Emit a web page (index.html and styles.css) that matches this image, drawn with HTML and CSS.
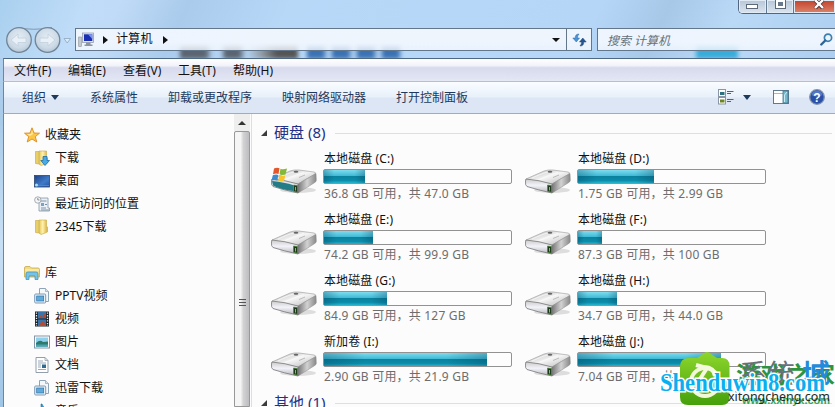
FILE: index.html
```html
<!DOCTYPE html>
<html lang="zh-CN">
<head>
    <meta charset="UTF-8">
    <title>计算机</title>
    <link rel="stylesheet" href="styles.css">
</head>
<body>
    <!-- shared icons -->
    <svg class="defs" width="0" height="0">
        <defs>
            <linearGradient id="top" x1="0" y1="0" x2="1" y2="1"><stop offset="0" stop-color="#b4b4b4"/><stop offset=".5" stop-color="#f4f4f4"/><stop offset="1" stop-color="#b8b8b8"/></linearGradient>
            <linearGradient id="side" x1="0" y1="0" x2="1" y2="0"><stop offset="0" stop-color="#777"/><stop offset=".5" stop-color="#d2d2d2"/><stop offset="1" stop-color="#888"/></linearGradient>
            <linearGradient id="front" x1="0" y1="0" x2="0" y2="1"><stop offset="0" stop-color="#ccc"/><stop offset=".45" stop-color="#f2f2fa"/><stop offset="1" stop-color="#b4b4b8"/></linearGradient>
            <linearGradient id="folder" x1="0" y1="0" x2="1" y2="0"><stop offset="0" stop-color="#e5c65b"/><stop offset=".5" stop-color="#fff2ae"/><stop offset="1" stop-color="#dfb94d"/></linearGradient>
            <linearGradient id="screen" x1="0" y1="0" x2="1" y2="1"><stop offset="0" stop-color="#1c3f86"/><stop offset=".6" stop-color="#3f7bc8"/><stop offset="1" stop-color="#2554a0"/></linearGradient>
            <linearGradient id="leaf" x1="0" y1="0" x2="0" y2="1"><stop offset="0" stop-color="#8ed62c"/><stop offset="1" stop-color="#45a00c"/></linearGradient>
            <radialGradient id="nav" cx=".5" cy=".4" r=".6"><stop offset="0" stop-color="#e3ecf4"/><stop offset=".7" stop-color="#ccdae7"/><stop offset="1" stop-color="#b4c5d5"/></radialGradient>
            <symbol id="drive" viewBox="0 0 48 28">
                <ellipse cx="28" cy="23" rx="18" ry="3" fill="#000" opacity=".12"/>
                <path d="M2 12 L20 4 Q24 2.500 29 3 L44 5 Q46.500 5.500 45 7 L28 17 L2 13Z" fill="url(#top)" stroke="#999" stroke-width=".6"/>
                <path d="M28 17 L46 6.500 L46.300 13.500 Q46 15 44 16 L28 26Z" fill="url(#side)" stroke="#888" stroke-width=".5"/>
                <path d="M2 12 Q15 13 28 17 L28 26 Q14 23 3 19.500 Q1 18.500 1.500 14Z" fill="url(#front)" stroke="#777" stroke-width=".8"/>
                <path d="M23.500 18 L27.500 18.500 V25.200 L23.500 24.300Z" fill="#1d3a1a" stroke="#4a8b35" stroke-width=".7"/>
                <path d="M25.500 20 V23.500" stroke="#9be06c" stroke-width=".8"/>
                <path d="M8 11 Q21 5 26 4.500 M15 12.500 Q28 7 34 5.500" stroke="#fff" stroke-width=".8" fill="none" opacity=".8"/>
                <ellipse cx="26" cy="4.800" rx="2.400" ry="1" fill="#666"/>
                <path d="M29 10.500 L35 8" stroke="#999" stroke-width=".6"/>
            </symbol>
            <symbol id="folder-open" viewBox="0 0 16 16">
                <path d="M1.500 1.500 H9 V14.500 L1.500 13.500Z" fill="#e8cf69" stroke="#c5a645" stroke-width=".6"/>
                <path d="M5 1 H12.500 V13.500 L7 15.500 L5 14Z" fill="url(#folder)" stroke="#cba945" stroke-width=".6"/>
                <path d="M12.500 7 L14 8 V13 L12.500 13.500Z" fill="#dfb94d"/>
            </symbol>
            <symbol id="device-lib" viewBox="0 0 16 16">
                <path d="M5.500 .5 H11.500 L14.500 3.500 V13.500 H5.500Z" fill="#f4f8fb" stroke="#8ea4b7"/>
                <path d="M11.500 .5 V3.500 H14.500" fill="#d6e2ee" stroke="#8ea4b7" stroke-width=".7"/>
                <rect x=".7" y="6" width="11" height="9" rx="1" fill="#e4eff7" stroke="#7e9bb5"/>
                <rect x="2.700" y="8" width="7" height="5" fill="#5eaadb" stroke="#28699f" stroke-width=".6"/>
            </symbol>
        </defs>
    </svg>

    <div class="window">
        <header class="glass">
            <i class="ghost ghost-a"></i><i class="ghost ghost-b"></i><i class="ghost ghost-c"></i>
            <div class="captions">
                <span class="cap cap-min"><i></i></span><span class="cap cap-max"><i></i></span><span class="cap cap-close">
                    <svg width="12" height="9" viewBox="0 0 12 9"><path d="M2 0 L10 8.500 M10 0 L2 8.500" stroke="#5b3a3a" stroke-width="4"/><path d="M2 0 L10 8 M10 0 L2 8" stroke="#fff" stroke-width="2.400"/></svg>
                </span>
            </div>
            <div class="navbar">
                <svg class="nav-buttons" width="66" height="28" viewBox="0 0 66 28">
                    <path d="M14 1.500 Q27 5 47 1.500" fill="none" stroke="#8299b1"/>
                    <circle cx="14" cy="14" r="12.300" fill="url(#nav)" stroke="#718496" stroke-width="1.300"/>
                    <circle cx="42.500" cy="14" r="12.300" fill="url(#nav)" stroke="#718496" stroke-width="1.300"/>
                    <path d="M6 14 L13 8 V12 H21 V16.500 H13 V20Z" fill="#e9f0f7" stroke="#c2d0dd" stroke-width=".8"/>
                    <path d="M50 14 L43 8 V12 H35 V16.500 H43 V20Z" fill="#e9f0f7" stroke="#c2d0dd" stroke-width=".8"/>
                    <path d="M59 12.500 H65.500 L62.200 17Z" fill="#dcebf8" stroke="#8ba6c0" stroke-width=".8"/>
                </svg>
                <div class="address">
                    <svg width="16" height="16" viewBox="0 0 16 16">
                        <rect x="4.500" y="1" width="11" height="9.500" fill="#dfe2e6" stroke="#98a0aa" stroke-width=".8"/>
                        <rect x="6" y="2.300" width="8.300" height="6.700" fill="#1b2fb4"/><path d="M10 2.300 H14.300 V7Z" fill="#7b96ee"/>
                        <path d="M8 10.500 H12.500 V12.500 H14.500 V14 H6.500 V12.500 H8Z" fill="#8c949f"/>
                        <rect x=".7" y="5" width="2.600" height="9.500" fill="#c3c8ce" stroke="#8b9198" stroke-width=".6"/>
                    </svg>
                    <span class="crumb-arrow"></span>
                    <span class="crumb">计算机</span>
                    <span class="crumb-arrow"></span>
                    <span class="drop-arrow"></span>
                    <span class="refresh">
                        <svg width="15" height="14" viewBox="0 0 15 14">
                            <path d="M7 1 Q3 1 3.300 5 H.8 L4.300 9 L7.500 5 H5.300 Q5.300 3 7 1Z" fill="#4a93d4" stroke="#2c67a8" stroke-width=".5"/>
                            <path d="M8 13 Q12 13 11.700 9 H14.200 L10.800 5 L7.500 9 H9.700 Q9.700 11 8 13Z" fill="#25558e" stroke="#1e487c" stroke-width=".5"/>
                        </svg>
                    </span>
                </div>
                <div class="search">
                    <span>搜索 计算机</span>
                    <svg width="13" height="13" viewBox="0 0 13 13"><circle cx="8" cy="4.700" r="3.600" fill="#e9f4fc" stroke="#3d7fae" stroke-width="1.700"/><path d="M5.300 7.500 L1.300 11.500" stroke="#2d6594" stroke-width="2.400" stroke-linecap="round"/></svg>
                </div>
            </div>
        </header>

        <nav class="menubar">
            <span>文件(F)</span><span>编辑(E)</span><span>查看(V)</span><span>工具(T)</span><span>帮助(H)</span>
        </nav>

        <div class="toolbar">
            <span class="organize">组织 <i class="caret"></i></span>
            <span>系统属性</span>
            <span>卸载或更改程序</span>
            <span>映射网络驱动器</span>
            <span>打开控制面板</span>
            <div class="tools">
                <svg width="16" height="16" viewBox="0 0 16 16">
                    <rect x=".5" y=".5" width="7" height="7" fill="#fff" stroke="#8a96a5"/><rect x="2" y="3" width="4.500" height="3" fill="#2b7182"/>
                    <rect x=".5" y="8.500" width="7" height="6.500" fill="#fff" stroke="#8a96a5"/><rect x="2" y="10.500" width="4.500" height="3" fill="#698621"/>
                    <path d="M9 2.500 H15.500 M9 4.500 H13 M9 10.500 H15.500 M9 12.500 H13" stroke="#58616d"/>
                </svg>
                <i class="caret caret-view"></i>
                <svg width="16" height="14" viewBox="0 0 16 14"><rect x=".5" y=".5" width="15" height="13" fill="#fff" stroke="#5f798f"/><path d="M1 3.500 H15" stroke="#a6b8c6"/><rect x="10" y="1" width="5" height="12" fill="#74bbcf" stroke="#42788c" stroke-width=".8"/><path d="M11.500 12 V5 L14 2" stroke="#c8edf4" fill="none"/></svg>
                <svg class="help" width="16" height="16" viewBox="0 0 16 16"><circle cx="8" cy="8" r="7.300" fill="#2850a8" stroke="#8392ac" stroke-width="1.300"/><path d="M2.500 6 A5.700 5.700 0 0 1 13.500 6 Q8 9 2.500 6Z" fill="#6d94dc" opacity=".6"/><text x="8" y="12.500" text-anchor="middle">?</text></svg>
            </div>
        </div>

        <main class="content">
            <aside class="sidebar">
                <ul class="tree">
                    <li class="root"><svg width="16" height="16" viewBox="0 0 16 16"><path d="M8 .8 L10 6 L15.500 6.200 L11.300 9.700 L12.800 15 L8 12 L3.200 15 L4.700 9.700 L.5 6.200 L6 6Z" fill="#fbc646" stroke="#db8b20" stroke-width=".9"/><path d="M8 3 L9 7 L6 9 L3 7 L7 7Z" fill="#ffe9a0"/></svg>收藏夹</li>
                    <li><svg width="16" height="16" viewBox="0 0 16 16"><use href="#folder-open"/><path d="M9 6.500 H13 V10.500 H15.500 L11 15.500 L6.800 10.500 H9Z" fill="#4aaae3" stroke="#1d6da9" stroke-width=".8"/></svg>下载</li>
                    <li><svg width="16" height="16" viewBox="0 0 16 16"><rect x=".5" y="2.500" width="15" height="11.500" fill="url(#screen)" stroke="#2b4570" stroke-width=".8"/><path d="M1 12.500 H15" stroke="#5d82b4"/><circle cx="2.500" cy="12" r="1.500" fill="#a4dff0"/></svg>桌面</li>
                    <li><svg width="16" height="16" viewBox="0 0 16 16"><path d="M5 2 H14 V12 H15.500 V15 H5Z" fill="#eaf0f5" stroke="#8696a5" stroke-width=".8"/><path d="M7 5 H12.500 M7 12 H12 M7 14 H15" stroke="#8095a8"/><rect x="7" y="7" width="3" height="3" fill="#78a4c4"/><path d="M11 8.500 H13" stroke="#7393ad"/><circle cx="3.800" cy="4" r="3.200" fill="#f6f6f6" stroke="#8f9aa4" stroke-width=".8"/><path d="M3.800 2 V4 H5.500" stroke="#666" stroke-width=".7" fill="none"/></svg>最近访问的位置</li>
                    <li><svg width="16" height="16"><use href="#folder-open"/></svg>2345下载</li>
                    <li class="gap"></li>
                    <li class="root"><svg width="16" height="16" viewBox="0 0 16 16"><path d="M.5 3 Q.5 1.500 2 1.500 H6 L7.500 3 H14 Q15.500 3 15.500 4.500 V12 H.5Z" fill="#f0dc85" stroke="#c9aa4b" stroke-width=".8"/><path d="M1 5 H15" stroke="#fff5c4"/><path d="M2 14.500 V9 Q2 7 4 7 H12 Q14 7 14 9 V14.500 H11 V11 H5 V14.500Z" fill="#75c3e6" stroke="#3d8cb8" stroke-width=".7"/></svg>库</li>
                    <li><svg width="16" height="16"><use href="#device-lib"/></svg>PPTV视频</li>
                    <li><svg width="16" height="16" viewBox="0 0 16 16"><rect x="1" y=".5" width="14" height="15" fill="#1e2429"/><rect x="4" y="1" width="8" height="6.500" fill="#3b74aa"/><rect x="4" y="8.500" width="8" height="6.500" fill="#3b74aa"/><path d="M5 4 L9 6 L11 2 V7 H6Z M5 14 L8 10 L11 12 V14Z" fill="#b64932"/><path d="M2.500 1.500 V15 M13.500 1.500 V15" stroke="#eee" stroke-width="1.300" stroke-dasharray="1.300 1.300"/></svg>视频</li>
                    <li><svg width="16" height="16" viewBox="0 0 16 16"><rect x=".5" y="2" width="15" height="12" fill="#fff" stroke="#8496a5"/><rect x="2" y="3.500" width="12" height="9" fill="#8fd0ed"/><path d="M2 9 Q6 5 9 8 L14 7.500 V12.500 H2Z" fill="#2f7969"/><path d="M2 10.500 H14 V12.500 H2Z" fill="#42a4b8"/></svg>图片</li>
                    <li><svg width="16" height="16" viewBox="0 0 16 16"><path d="M2 .5 H11 L14 3.500 V15.500 H2Z" fill="#fff" stroke="#8795a2" stroke-width=".9"/><path d="M11 .5 V3.500 H14" fill="none" stroke="#8795a2" stroke-width=".7"/><path d="M4 4 H9 M4 6 H12 M4 8 H7 M4 10 H7 M4 12.500 H12" stroke="#8da2b6" stroke-width=".9"/><rect x="8" y="7.500" width="4" height="3.500" fill="#2e6b91"/></svg>文档</li>
                    <li><svg width="16" height="16"><use href="#device-lib"/></svg>迅雷下载</li>
                    <li><svg width="16" height="16" viewBox="0 0 16 16"><path d="M8 1 Q9 4 12 6 Q13 9 11 11 Q11 7 9 6.500 V13 Q8 15.500 5 15 Q3 13 5 11.500 L7 11 V1Z" fill="#2e9bd4" stroke="#1c70a5" stroke-width=".6"/></svg>音乐</li>
                </ul>
                <div class="scrollbar">
                    <i class="scroll-up"></i>
                    <div class="thumb"><i></i><i></i><i></i></div>
                </div>
            </aside>

            <section class="files">
                <h2 class="group"><svg width="8" height="8" viewBox="0 0 8 8"><path d="M7 1 V7 H1Z" fill="#3b3b3b"/></svg><span>硬盘 (8)</span></h2>
                <div class="drives">
                    <div class="drive">
                        <svg class="disk" width="48" height="28" viewBox="0 0 48 28"><use href="#drive"/><path d="M2 14 Q15 15.500 23 18 V24 Q10 22 3 18.500Z" fill="#247c86"/><path d="M4 1.500 Q7 0 9.500 1.300 L8.500 7 Q6 6 3 7.300Z" fill="#e4562b"/><path d="M10.500 1.700 Q13 3 17 1.500 L15.500 7.500 Q12 8.500 9.500 7.300Z" fill="#83b936"/><path d="M2.800 8.300 Q6 7 8.300 8 L7.300 13.500 Q4 12.300 1.500 13.500Z" fill="#3c8bce"/><path d="M9.300 8.300 Q12 9.500 15.300 8.500 L14 14 Q11 15 8.300 13.800Z" fill="#f6c42c"/></svg>
                        <div class="info"><b>本地磁盘 (C:)</b><div class="bar"><i style="width:41px"></i></div><small>36.8 GB 可用，共 47.0 GB</small></div>
                    </div>
                    <div class="drive">
                        <svg class="disk" width="48" height="28"><use href="#drive"/></svg>
                        <div class="info"><b>本地磁盘 (D:)</b><div class="bar"><i style="width:76px"></i></div><small>1.75 GB 可用，共 2.99 GB</small></div>
                    </div>
                    <div class="drive">
                        <svg class="disk" width="48" height="28"><use href="#drive"/></svg>
                        <div class="info"><b>本地磁盘 (E:)</b><div class="bar"><i style="width:49px"></i></div><small>74.2 GB 可用，共 99.9 GB</small></div>
                    </div>
                    <div class="drive">
                        <svg class="disk" width="48" height="28"><use href="#drive"/></svg>
                        <div class="info"><b>本地磁盘 (F:)</b><div class="bar"><i style="width:24px"></i></div><small>87.3 GB 可用，共 100 GB</small></div>
                    </div>
                    <div class="drive">
                        <svg class="disk" width="48" height="28"><use href="#drive"/></svg>
                        <div class="info"><b>本地磁盘 (G:)</b><div class="bar"><i style="width:63px"></i></div><small>84.9 GB 可用，共 127 GB</small></div>
                    </div>
                    <div class="drive">
                        <svg class="disk" width="48" height="28"><use href="#drive"/></svg>
                        <div class="info"><b>本地磁盘 (H:)</b><div class="bar"><i style="width:39px"></i></div><small>34.7 GB 可用，共 44.0 GB</small></div>
                    </div>
                    <div class="drive">
                        <svg class="disk" width="48" height="28"><use href="#drive"/></svg>
                        <div class="info"><b>新加卷 (I:)</b><div class="bar"><i style="width:163px"></i></div><small>2.90 GB 可用，共 21.9 GB</small></div>
                    </div>
                    <div class="drive">
                        <svg class="disk" width="48" height="28"><use href="#drive"/></svg>
                        <div class="info"><b>本地磁盘 (J:)</b><div class="bar"><i style="width:143px"></i></div><small>7.04 GB 可用，共</small></div>
                    </div>
                </div>
                <h2 class="group"><svg width="8" height="8" viewBox="0 0 8 8"><path d="M7 1 V7 H1Z" fill="#3b3b3b"/></svg><span>其他 (1)</span></h2>
            </section>
        </main>
    </div>

    <!-- site watermark -->
    <svg class="watermark" width="175" height="57" viewBox="0 0 175 57">
        <path d="M37 8 L43 4 Q47 0 51 4 L57 8 H62 Q69.500 8 69.500 16 V47 Q69.500 55 62 55 H28 Q20 55 20 47 V17 Q20 8 29 8Z" fill="url(#leaf)"/>
        <circle cx="45" cy="32" r="14" fill="none" stroke="#f1f8d8" stroke-width="4"/>
        <path d="M36 15 L47 18 L40 29 M43 17 Q53 16 55 26" fill="none" stroke="#f4f8dd" stroke-width="4"/>
        <text class="wm-green" x="76" y="33" textLength="99" lengthAdjust="spacingAndGlyphs">游戏之家</text>
        <text class="wm-gray" x="79" y="33" textLength="56" lengthAdjust="spacingAndGlyphs">系统</text>
        <text class="wm-blue" x="142" y="33" textLength="28" lengthAdjust="spacingAndGlyphs">城</text>
        <text class="wm-url-green" x="82" y="54" textLength="88" lengthAdjust="spacingAndGlyphs">www.xxmyx.com</text>
        <text class="wm-url" x="68" y="51" textLength="102" lengthAdjust="spacingAndGlyphs">xitongcheng.com</text>
        <text class="wm-main" x="0" y="41" textLength="165" lengthAdjust="spacingAndGlyphs">Shenduwin8.com</text>
    </svg>
</body>
</html>
```
FILE: styles.css
```css
* { box-sizing: border-box; }
body { margin: 0; width: 835px; height: 407px; overflow: hidden; position: relative; font-family: "Noto Sans", "Noto Sans CJK SC", sans-serif; font-size: 12px; color: #111; background: #b5d5f5; }
i { font-style: normal; }
svg { display: block; flex: none; }
.defs { position: absolute; }
.window { height: 407px; display: flex; flex-direction: column; background: linear-gradient(#b5d3f1, #a9cbea 30%, #c8e0f6 60%, #9fc5e6); }

/* title and address */
.glass { position: relative; height: 58px; padding-top: 26px; background: linear-gradient(115deg, #a9d0ef 0, #bfdcf8 10%, #c0dbf7 14%, #aacbec 22%, #b8d8f8 34%, #b5d6f7 70%, #a8c8e8 78%, #bad9f7 86%, #aecff0); overflow: hidden; }
.ghost { position: absolute; top: 45px; height: 14px; filter: blur(2px); }
.ghost-a { left: 180px; width: 118px; background: linear-gradient(90deg, #5b6470 0 22%, transparent 27% 35%, #5b6470 38% 50%, transparent 56%, #8f979f 70%, #555 82% 100%); }
.ghost-b { left: 307px; width: 94px; background: repeating-linear-gradient(90deg, #3b72b4 0 16px, #a9cbee 20px 25px); }
.ghost-c { left: 696px; width: 42px; background: #3aacda; }
.captions { position: absolute; right: 0; top: 0; display: flex; width: 97px; height: 14px; border: 1px solid #52677f; border-top: 0; border-right: 0; border-radius: 0 0 0 5px; overflow: hidden; }
.cap { display: flex; justify-content: center; width: 28px; background: linear-gradient(#b6c6d7, #dae4ee); border-right: 1px solid #627990; box-shadow: inset 0 0 0 1px #e1ebf5; }
.cap-min i { width: 12px; height: 5px; margin-top: 4px; border: 1px solid #5d6978; background: #fff; }
.cap-max i { width: 11px; height: 10px; margin-top: -1px; border: 1px solid #5d6978; background: #69798c; box-shadow: inset 0 0 0 2px #fff; }
.cap-close { width: 41px; border: 0; padding-left: 8px; background: linear-gradient(#c3412c, #dc8469); }
.navbar { display: flex; position: relative; }
.nav-buttons { margin-left: 5px; }
.address, .search { display: flex; align-items: center; height: 23px; margin-top: 2px; border: 1px solid #62778c; background: linear-gradient(rgba(240, 246, 254, .97) 60%, rgba(245, 249, 255, .8)); }
.address { width: 517px; margin-left: 4px; padding-left: 2px; font-size: 12px; }
.crumb-arrow { width: 0; border: 4px solid transparent; border-left: 5px solid #111; border-right: 0; margin-left: 9px; }
.crumb { margin-left: 8px; letter-spacing: .2px; line-height: 18px; margin-top: -2px; }
.crumb + .crumb-arrow { margin-left: 10px; }
.drop-arrow { margin-left: auto; margin-right: 6px; border: 4px solid transparent; border-top: 4px solid #111; border-bottom: 0; }
.refresh { width: 25px; height: 21px; padding: 4px 0 0 5px; border-left: 1px solid #62778c; }
.search { flex: 1; margin-left: 5px; padding-left: 9px; border-right: 0; justify-content: space-between; padding-right: 2px; color: #66717c; font-style: italic; }

/* menu and toolbar */
.menubar { display: flex; align-items: center; gap: 16px; height: 24px; margin-left: 3px; padding-left: 10px; border-top: 1px solid #4d6885; border-left: 1px solid #6588a8; border-bottom: 1px solid #b4bfd0; background: linear-gradient(#fff, #f2f3fa 30%, #d6daec 40%, #e4e7f4); }
.menubar span { width: 39px; white-space: nowrap; }
.menubar span:nth-child(n+2) { margin-left: -1px; margin-right: 1px; }
.toolbar { display: flex; align-items: center; height: 32px; margin-left: 3px; padding: 0 0 1px 18px; border-left: 1px solid #6588a8; border-bottom: 1px solid #9eacbc; background: linear-gradient(#fafdff, #e8f0fa 48%, #dce6f4 52%, #dce7f5); color: #1e395b; }
.toolbar > span { margin-right: 30px; }
.toolbar > .organize { margin-right: 31px; }
.organize { display: flex; align-items: center; gap: 5px; }
.caret { border: 4px solid transparent; border-top: 5px solid #1e395b; border-bottom: 0; }
.tools { display: flex; align-items: center; margin-left: auto; padding-right: 10px; }
.caret-view { margin: 0 22px 0 9px; }
.help { margin-left: 20px; }
.help text { font: bold 12px "Liberation Sans", sans-serif; fill: #fff; }

/* panes */
.content { display: flex; flex: 1; min-height: 0; margin-left: 3px; border-left: 1px solid #6588a8; background: #fcfcfc; }
.sidebar { display: flex; width: 248px; border-right: 1px solid #d5e0ec; overflow: hidden; }
.tree { flex: 1; margin: 0; padding: 9px 0 0 30px; list-style: none; }
.tree li { display: flex; align-items: center; height: 23px; gap: 5px; white-space: nowrap; line-height: 18px; }
.tree .root { margin-left: -10px; }
.scrollbar { display: flex; flex-direction: column; width: 16px; margin-right: 1px; background: #eee; }
.scroll-up { align-self: center; margin: 7px 0 6px; border: 4px solid transparent; border-bottom: 4px solid #333; border-top: 0; }
.thumb { flex: 1; display: flex; flex-direction: column; align-items: center; gap: 2px; padding-top: 167px; border: 1px solid #989898; border-radius: 2px 2px 0 0; background: linear-gradient(90deg, #f5f5f5 0 40%, #d2d2d4 60%, #bcbcc1); }
.thumb i { width: 7px; height: 1px; background: #555; }
.files { flex: 1; padding: 9px 0 0 8px; overflow: hidden; }
.group { display: flex; align-items: center; gap: 6px; height: 20px; margin: 0; font-size: 15px; font-weight: normal; line-height: 20px; color: #1e3287; }
.group::after { content: ""; flex: 1; height: 1px; margin-right: 3px; background: #dedfe2; }
.group span { width: 55px; white-space: nowrap; margin-top: -2px; }
.drives { display: grid; grid-template-columns: 254px 254px; grid-auto-rows: 61px; padding: 7px 0 0 10px; height: 250px; }
.drive { display: flex; gap: 5px; }
.disk { margin-top: 17px; }
.info { width: 189px; }
.info b, .info small { display: block; height: 18px; line-height: 18px; font-size: 12px; font-weight: normal; white-space: nowrap; padding-left: 1px; }
.info b { letter-spacing: .1px; }
/* TC face centres the full-width comma */
.info small { margin-top: 1px; color: #6d6d6d; font-family: "Noto Sans", "Noto Sans CJK TC", sans-serif; letter-spacing: .2px; }
.bar { height: 15px; margin-top: 1px; border: 1px solid #929292; border-radius: 2px; background: #fdfdfd; }
.bar i { display: block; height: 13px; background: linear-gradient(90deg, rgba(0, 60, 90, .3), transparent 25% 75%, rgba(0, 60, 90, .3)), linear-gradient(#7fdcee, #3fb9d6 45%, #0a819d 50%, #0a8dab 80%, #27b4cd); }

.watermark { position: absolute; left: 660px; top: 350px; }
.watermark text { font-family: "Noto Sans CJK SC", sans-serif; }
.watermark .wm-green { font-size: 23px; font-weight: bold; fill: #2c9440; }
.watermark .wm-gray { font-size: 26px; fill: #68707a; }
.watermark .wm-blue { font-size: 26px; font-weight: bold; fill: #238bda; }
.watermark .wm-url { font-family: "Noto Sans", sans-serif; font-size: 13px; fill: #242b28; }
.watermark .wm-url-green { font: bold 10px "Liberation Sans", sans-serif; fill: #37a652; }
.watermark .wm-main { font: bold 25px "Liberation Serif", serif; fill: #0baff0; stroke: #fff; stroke-width: 3px; paint-order: stroke; }
```
